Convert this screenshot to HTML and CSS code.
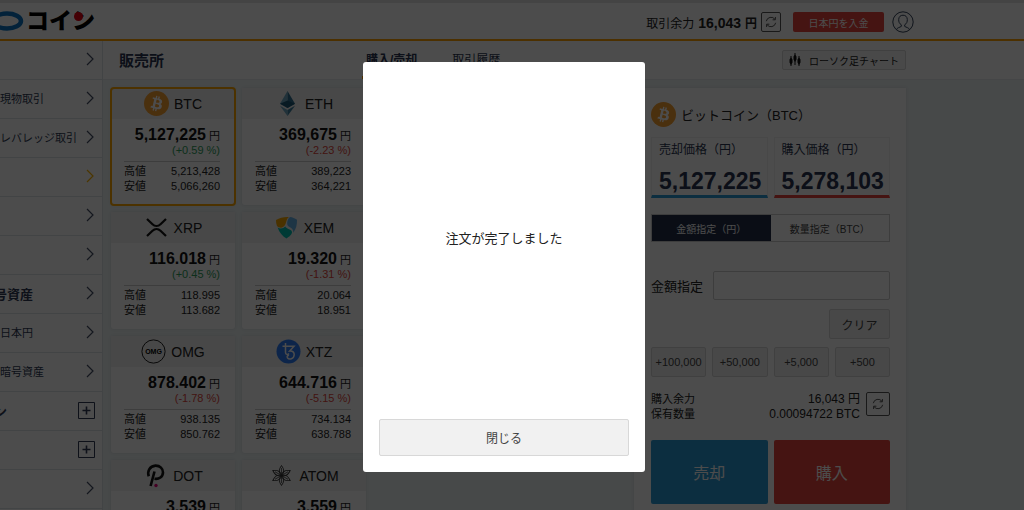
FILE: index.html
```html
<!DOCTYPE html>
<html lang="ja">

<head>
    <meta charset="utf-8">
    <title>販売所</title>
    <link rel="stylesheet" href="styles.css">
</head>

<body>
    <!-- アイコン -->
    <svg class="defs" aria-hidden="true">
        <symbol id="btc" viewBox="0 0 32 32">
            <circle cx="16" cy="16" r="16" fill="#f9a030"/>
            <path fill="#fff" d="M23.189 14.02c.314-2.096-1.283-3.223-3.465-3.975l.708-2.84-1.728-.43-.69 2.765c-.454-.114-.92-.22-1.385-.326l.695-2.783L15.596 6l-.708 2.839c-.376-.086-.746-.17-1.104-.26l.002-.009-2.384-.595-.46 1.846s1.283.294 1.256.312c.7.175.826.638.805 1.006l-.806 3.235c.048.012.11.03.18.057l-.183-.045-1.13 4.532c-.086.212-.303.531-.793.41.018.025-1.256-.313-1.256-.313l-.858 1.978 2.25.561c.418.105.828.215 1.231.318l-.715 2.872 1.727.43.708-2.84c.472.127.93.245 1.378.357l-.706 2.828 1.728.43.715-2.866c2.948.558 5.164.333 6.097-2.333.752-2.146-.037-3.385-1.588-4.192 1.13-.26 1.98-1.003 2.207-2.538zm-3.95 5.538c-.533 2.147-4.148.986-5.32.695l.95-3.805c1.172.293 4.929.872 4.37 3.11zm.535-5.569c-.487 1.953-3.495.96-4.47.717l.86-3.45c.975.243 4.118.696 3.61 2.733z"/>
        </symbol>
        <symbol id="refresh" viewBox="0 0 12 12">
            <path d="M1.3 5.2A4.8 4.8 0 0 1 10 3.4M10.7 6.8A4.8 4.8 0 0 1 2 8.6M10.4 1v2.8H7.6M1.6 11V8.2h2.8" fill="none" stroke="currentColor"/>
        </symbol>
        <symbol id="arrow" viewBox="0 0 8 14">
            <path d="M1 1l6 6-6 6" fill="none" stroke="currentColor" stroke-width="1.2"/>
        </symbol>
        <symbol id="plus" viewBox="0 0 17 17">
            <path d="M.5.5h16v16H.5z" fill="none" stroke="currentColor"/>
            <path d="M8.5 4.5v8M4.5 8.5h8" stroke="currentColor" stroke-width="1.6"/>
        </symbol>
        <symbol id="petal" viewBox="0 0 25 25">
            <path d="M12.500 2.500Q17 8.500 12.500 12.500 8 8.500 12.500 2.500z" fill="none" stroke="#333" stroke-width=".9"/>
            <path d="M12.500 5v7.500" stroke="#333" stroke-width=".7"/>
        </symbol>
    </svg>

    <header>
        <div class="header-inner">
            <a class="logo" href="#">
                <svg width="24" height="20" viewBox="0 0 24 20"><ellipse cx="7" cy="10" rx="14" ry="7.500" fill="none" stroke="#0a73c4" stroke-width="4.500"/></svg>
                <span>コイン<i></i></span>
            </a>
            <div class="account">
                <span>取引余力</span>
                <strong>16,043 <small>円</small></strong>
                <button class="refresh" aria-label="更新"><svg width="12" height="12"><use href="#refresh"/></svg></button>
                <button class="deposit">日本円を入金</button>
                <a class="user" href="#" aria-label="アカウント">
                    <svg width="22" height="22" viewBox="0 0 22 22" fill="none" stroke="#33435a"><circle cx="11" cy="11" r="10.2"/><path d="M4.5 18.6c.5-2 3.400-2.200 4.800-3.200v-1.600C7.300 12.600 6.600 10.800 6.700 8.400 6.800 5.800 8.500 4.200 11 4.200s4.200 1.600 4.300 4.200c.1 2.400-.6 4.200-2.600 5.400v1.600c1.400 1 4.300 1.200 4.800 3.200"/></svg>
                </a>
            </div>
        </div>
    </header>

    <div class="wrap">
        <nav>
            <ul>
                <li><a href="#"><span></span><svg class="arrow"><use href="#arrow"/></svg></a></li>
                <li><a href="#"><span>現物取引</span><svg class="arrow"><use href="#arrow"/></svg></a></li>
                <li><a href="#"><span>レバレッジ取引</span><svg class="arrow"><use href="#arrow"/></svg></a></li>
                <li class="current"><a href="#"><span></span><svg class="arrow"><use href="#arrow"/></svg></a></li>
                <li><a href="#"><span></span><svg class="arrow"><use href="#arrow"/></svg></a></li>
                <li><a href="#"><span></span><svg class="arrow"><use href="#arrow"/></svg></a></li>
                <li class="group"><a href="#"><span>号資産</span><svg class="arrow"><use href="#arrow"/></svg></a></li>
                <li><a href="#"><span>日本円</span><svg class="arrow"><use href="#arrow"/></svg></a></li>
                <li><a href="#"><span>暗号資産</span><svg class="arrow"><use href="#arrow"/></svg></a></li>
                <li class="group"><a href="#"><span>ン</span><svg class="plus"><use href="#plus"/></svg></a></li>
                <li><a href="#"><span></span><svg class="plus"><use href="#plus"/></svg></a></li>
                <li><a href="#"><span></span><svg class="arrow"><use href="#arrow"/></svg></a></li>
                <li><a href="#"><span></span><svg class="arrow"><use href="#arrow"/></svg></a></li>
            </ul>
        </nav>

        <main>
            <div class="titlebar">
                <div class="titlebar-inner">
                    <h1>販売所</h1>
                    <div class="tabs">
                        <a class="active" href="#">購入/売却</a>
                        <a href="#">取引履歴</a>
                    </div>
                    <button class="chart">
                        <svg width="12" height="14" viewBox="0 0 12 14"><path d="M2 3v10M6 0v12M10 3v10" stroke="#111"/><path d="M2 4.500l1.500 2v3L2 12 .5 9.500v-3zM6 1.500l1.500 2v3L6 9 4.500 6.500v-3zM10 4.500l1.500 2v3L10 12 8.500 9.500v-3z" fill="#111"/></svg>
                        ローソク足チャート
                    </button>
                </div>
            </div>

            <div class="content">
                <ul class="coins">
                    <li class="coin selected">
                        <h2><svg width="25" height="25"><use href="#btc"/></svg>BTC</h2>
                        <div class="rate">
                            <p class="price"><b>5,127,225</b> 円</p>
                            <p class="up">(+0.59 %)</p>
                            <dl><dt>高値</dt><dd>5,213,428</dd><dt>安値</dt><dd>5,066,260</dd></dl>
                        </div>
                    </li>
                    <li class="coin">
                        <h2>
                            <svg width="25" height="25" viewBox="0 0 25 25"><path fill="#6fa8c4" d="M12.500 0L5 12.800l7.500 4.200z"/><path fill="#2f6f8f" d="M12.500 0L20 12.800l-7.500 4.200z"/><path fill="#1d5877" d="M12.500 9.500L5 12.800l7.500 4.200 7.500-4.200z"/><path fill="#6fa8c4" d="M5 14.800l7.500 4.300V25z"/><path fill="#3c7e9d" d="M20 14.800l-7.500 4.300V25z"/></svg>ETH
                        </h2>
                        <div class="rate">
                            <p class="price"><b>369,675</b> 円</p>
                            <p class="down">(-2.23 %)</p>
                            <dl><dt>高値</dt><dd>389,223</dd><dt>安値</dt><dd>364,221</dd></dl>
                        </div>
                    </li>
                    <li class="coin">
                        <h2>
                            <svg width="25" height="25" viewBox="0 0 25 25" fill="none" stroke="#111" stroke-width="2.200"><path d="M3 4l5.500 5.300a5.800 5.800 0 0 0 8 0L22 4M3 21l5.500-5.300a5.800 5.800 0 0 1 8 0L22 21"/></svg>XRP
                        </h2>
                        <div class="rate">
                            <p class="price"><b>116.018</b> 円</p>
                            <p class="up">(+0.45 %)</p>
                            <dl><dt>高値</dt><dd>118.995</dd><dt>安値</dt><dd>113.682</dd></dl>
                        </div>
                    </li>
                    <li class="coin">
                        <h2>
                            <svg width="25" height="25" viewBox="0 0 25 25"><path fill="#f7a800" d="M2 5C6 2.600 10.500 1.600 15 2c-2.500 1.600-2.300 4-3.500 7C9.500 13.500 5.500 13.500 3 11 2.200 9 2 7 2 5z"/><path fill="#67b2e8" d="M16 2.100c2.500.3 4.800 1.200 7 2.600.2 5-.9 9.300-3.700 13 .3-3-1.500-4.700-4.300-5.900-3.400-1.600-1.400-8.500 1-9.700z"/><path fill="#00c4b3" d="M3.700 12.500c2.600 1.600 5.600 1 7.600-1.100 1.200 2.800 6.500 2.300 6.700 5.700.1 2.500-3 4.900-5.500 6.400-4.300-2.500-7.300-6.200-8.800-11z"/></svg>XEM
                        </h2>
                        <div class="rate">
                            <p class="price"><b>19.320</b> 円</p>
                            <p class="down">(-1.31 %)</p>
                            <dl><dt>高値</dt><dd>20.064</dd><dt>安値</dt><dd>18.951</dd></dl>
                        </div>
                    </li>
                    <li class="coin">
                        <h2>
                            <svg width="25" height="25" viewBox="0 0 25 25"><circle cx="12.500" cy="12.500" r="11.600" fill="none" stroke="#222"/><text class="omg" x="12.500" y="15" text-anchor="middle">OMG</text></svg>OMG
                        </h2>
                        <div class="rate">
                            <p class="price"><b>878.402</b> 円</p>
                            <p class="down">(-1.78 %)</p>
                            <dl><dt>高値</dt><dd>938.135</dd><dt>安値</dt><dd>850.762</dd></dl>
                        </div>
                    </li>
                    <li class="coin">
                        <h2>
                            <svg width="25" height="25" viewBox="0 0 25 25"><circle cx="12.500" cy="12.500" r="12" fill="#2c7df7"/><path d="M9.500 4v9.500c0 2.300 2.500 2.400 3.400 1M6.500 7.300h11.500l-4.300 4.700c3-.3 4.600 1.300 4.500 3.700-.2 4.200-5 5.400-6.800 3-.8-1.300.3-2.600 1.500-1.900" fill="none" stroke="#fff" stroke-width="1.500"/></svg>XTZ
                        </h2>
                        <div class="rate">
                            <p class="price"><b>644.716</b> 円</p>
                            <p class="down">(-5.15 %)</p>
                            <dl><dt>高値</dt><dd>734.134</dd><dt>安値</dt><dd>638.788</dd></dl>
                        </div>
                    </li>
                    <li class="coin">
                        <h2>
                            <svg width="25" height="25" viewBox="0 0 25 25"><path d="M5.800 13.300C4 8.500 6.500 3 12.500 2.600c4.500-.1 7.600 3.100 7.500 6.800-.1 4.500-4 7-8.500 6.300M11.500 8.500L7.600 23" fill="none" stroke="#111" stroke-width="2.600"/><circle cx="13" cy="22.500" r="1.700" fill="#e6007a"/></svg>DOT
                        </h2>
                        <div class="rate">
                            <p class="price"><b>3,539</b> 円</p>
                        </div>
                    </li>
                    <li class="coin">
                        <h2>
                            <svg width="25" height="25" viewBox="0 0 25 25"><use href="#petal"/><use href="#petal" transform="rotate(60 12.500 12.500)"/><use href="#petal" transform="rotate(120 12.500 12.500)"/><use href="#petal" transform="rotate(180 12.500 12.500)"/><use href="#petal" transform="rotate(240 12.500 12.500)"/><use href="#petal" transform="rotate(300 12.500 12.500)"/></svg>ATOM
                        </h2>
                        <div class="rate">
                            <p class="price"><b>3,559</b> 円</p>
                        </div>
                    </li>
                </ul>

                <section class="order">
                    <h2><svg width="25" height="25"><use href="#btc"/></svg>ビットコイン（BTC）</h2>
                    <div class="pair quotes">
                        <div class="quote sell"><span>売却価格（円）</span><b>5,127,225</b></div>
                        <div class="quote buy"><span>購入価格（円）</span><b>5,278,103</b></div>
                    </div>
                    <div class="toggle">
                        <button class="on">金額指定（円）</button>
                        <button>数量指定（BTC）</button>
                    </div>
                    <div class="amount">
                        <label for="amount">金額指定</label>
                        <input id="amount" type="text">
                    </div>
                    <button class="gray clear">クリア</button>
                    <div class="add">
                        <button class="gray">+100,000</button>
                        <button class="gray">+50,000</button>
                        <button class="gray">+5,000</button>
                        <button class="gray">+500</button>
                    </div>
                    <div class="balance">
                        <dl><dt>購入余力</dt><dd>16,043 円</dd><dt>保有数量</dt><dd>0.00094722 BTC</dd></dl>
                        <button class="refresh" aria-label="更新"><svg width="12" height="12"><use href="#refresh"/></svg></button>
                    </div>
                    <div class="pair">
                        <button class="trade sell">売却</button>
                        <button class="trade buy">購入</button>
                    </div>
                </section>
            </div>
        </main>
    </div>

    <!-- 注文完了ダイアログ -->
    <div class="overlay">
        <div class="modal" role="dialog" aria-modal="true">
            <p>注文が完了しました</p>
            <button class="gray">閉じる</button>
        </div>
    </div>
</body>

</html>
```

FILE: styles.css
```css
* {
    box-sizing: border-box;
}

body {
    margin: 0;
    height: 100vh;
    overflow: hidden;
    background: #edf3f3;
    color: #222;
    font-family: "Liberation Sans", "Noto Sans CJK JP", sans-serif;
    font-size: 11px;
}

h1, h2, p, ul, dl, dd {
    margin: 0;
    padding: 0;
    list-style: none;
}

a {
    color: inherit;
    text-decoration: none;
}

button, input {
    margin: 0;
    padding: 0;
    font-family: inherit;
    border-radius: 2px;
}

svg {
    flex: none;
}

.defs {
    position: absolute;
    width: 0;
    height: 0;
}

/* header */
header {
    height: 41px;
    border-top: 3px solid #e4e4e4;
    border-bottom: 2px solid #ffa000;
    background: #fff;
}

.header-inner {
    display: flex;
    justify-content: space-between;
    align-items: center;
    max-width: 914px;
    height: 36px;
}

.logo {
    display: flex;
    align-items: center;
    gap: 2px;
    color: #000;
    font-size: 23px;
    line-height: 24px;
    font-weight: 900;
}

.logo span {
    position: relative;
}

/* red dot on the ン */
.logo i {
    position: absolute;
    top: 3px;
    right: 12px;
    width: 9px;
    height: 9px;
    border-radius: 50%;
    background: #e60012;
}

.account {
    display: flex;
    align-items: center;
    padding-top: 2px;
    font-size: 12px;
}

.account strong {
    margin: 0 4px;
    font-size: 14px;
}

.account small {
    font-size: 12px;
}

.refresh {
    display: flex;
    align-items: center;
    justify-content: center;
    width: 20px;
    height: 20px;
    border: 1px solid #555;
    background: #fff;
    color: #555;
}

.deposit {
    width: 91px;
    height: 20px;
    margin: 0 8px 0 12px;
    border: 0;
    background: #e8453c;
    color: #fff;
    font-size: 10px;
}

.user {
    display: flex;
}

/* side menu */
.wrap {
    display: flex;
}

nav {
    flex: 0 0 103px;
    overflow: hidden;
    border-right: 1px solid #dde3e6;
    background: #fff;
    color: #2f3b55;
}

nav li a {
    display: flex;
    align-items: center;
    justify-content: space-between;
    height: 39px;
    padding: 0 7px 2px 0;
    border-bottom: 1px solid #dde3e6;
    white-space: nowrap;
}

nav .group {
    font-size: 13px;
    font-weight: bold;
}

/* group names run past the left edge */
nav .group span {
    margin-left: -6px;
}

.arrow {
    width: 8px;
    height: 14px;
    margin-right: 1px;
    color: #444f66;
}

.current .arrow {
    color: #ffb400;
}

.plus {
    width: 17px;
    height: 17px;
}

/* title */
main {
    flex: 1;
    min-width: 0;
}

.titlebar {
    border-bottom: 1px solid #e6ecee;
    background: #fff;
}

.titlebar-inner {
    display: flex;
    align-items: center;
    max-width: 803px;
    height: 38px;
    padding-left: 16px;
}

h1 {
    width: 243px;
    padding-bottom: 2px;
    color: #2a3550;
    font-size: 15px;
}

.tabs {
    display: flex;
    flex: 1;
    gap: 27px;
    color: #2a3550;
    font-size: 12px;
}

.tabs a {
    padding: 3px 4px 0;
    line-height: 32px;
    border-bottom: 3px solid transparent;
}

.tabs .active {
    border-color: #ffa000;
    font-weight: bold;
}

.chart {
    display: flex;
    align-items: center;
    justify-content: center;
    gap: 8px;
    width: 124px;
    height: 20px;
    border: 1px solid #d5d5d5;
    background: #f4f4f4;
    color: #222;
    font-size: 10px;
}

.content {
    display: flex;
    justify-content: space-between;
    align-items: flex-start;
    max-width: 803px;
    padding: 8px 0 0 8px;
}

/* coins */
.coins {
    display: grid;
    grid-template-columns: 124px 124px;
    gap: 7px;
}

.coin {
    height: 117px;
    border-radius: 3px;
    background: #fff;
    box-shadow: 0 0 3px #d3dde0;
}

.selected {
    outline: 2px solid #ffa800;
    outline-offset: -1px;
}

.coin h2 {
    display: flex;
    align-items: center;
    justify-content: center;
    gap: 5px;
    height: 31px;
    background: #f0f0f0;
    font-size: 14px;
    font-weight: normal;
}

.omg {
    font-size: 7px;
    font-weight: bold;
}

.rate {
    padding: 8px 15px 0 13px;
    text-align: right;
}

.price {
    line-height: 16px;
}

.price b {
    color: #111;
    font-size: 16px;
}

.up, .down {
    padding-bottom: 4px;
    line-height: 13px;
    border-bottom: 1px solid #ccc;
    color: #2e9e5b;
}

.down {
    color: #e0463c;
}

dl {
    display: grid;
    grid-template-columns: auto 1fr;
    line-height: 15px;
    text-align: right;
}

dt {
    text-align: left;
}

.rate dl {
    padding-top: 2px;
}

/* order form */
.order {
    width: 272px;
    padding: 14px 16px 24px 17px;
    background: #fff;
    box-shadow: 0 0 3px #d3dde0;
}

.order h2 {
    display: flex;
    align-items: center;
    gap: 5px;
    height: 26px;
    padding-bottom: 2px;
    font-size: 13px;
    font-weight: normal;
}

.pair {
    display: grid;
    grid-template-columns: repeat(2, minmax(0, 1fr));
    gap: 6px;
}

.quotes {
    margin: 9px 0 16px;
}

.quote {
    display: flex;
    flex-direction: column;
    height: 61px;
    padding: 2px 0 0 7px;
    border: 1px solid #f0f0f0;
    border-bottom: 3px solid #2a9bd6;
    color: #2a3550;
    font-size: 12px;
    line-height: 20px;
    white-space: nowrap;
}

.quote b {
    font-size: 23px;
    line-height: 42px;
}

.quote.buy {
    border-bottom-color: #e8453c;
}

.toggle {
    display: grid;
    grid-template-columns: 1fr 1fr;
    height: 28px;
    border: 1px solid #ccc;
}

.toggle button {
    border: 0;
    border-radius: 0;
    background: #fff;
    color: #444;
    font-size: 10px;
}

.toggle .on {
    background: #222e48;
    color: #fff;
}

.amount {
    display: flex;
    align-items: center;
    gap: 10px;
    margin: 29px 0 9px;
    font-size: 13px;
}

.amount input {
    flex: 1;
    min-width: 0;
    height: 29px;
    border: 1px solid #ccc;
    background: #fff;
}

.gray {
    height: 30px;
    border: 1px solid #d8d8d8;
    background: #f1f1f1;
    color: #444;
    font-size: 11px;
}

.clear {
    display: block;
    width: 61px;
    margin: 0 0 8px auto;
    font-size: 12px;
}

.add {
    display: grid;
    grid-template-columns: repeat(4, 1fr);
    gap: 6px;
}

.balance {
    display: flex;
    align-items: flex-start;
    gap: 6px;
    margin: 15px 0 18px;
}

.balance dl {
    flex: 1;
}

.balance dd {
    font-size: 12px;
}

.balance .refresh {
    width: 24px;
    height: 24px;
}

.trade {
    height: 64px;
    border: 0;
    color: #fff;
    font-size: 16px;
}

.trade.sell {
    background: #2a9bd6;
}

.trade.buy {
    background: #e8453c;
}

/* dialog */
.overlay {
    position: fixed;
    top: 0;
    right: 0;
    bottom: 0;
    left: 0;
    display: flex;
    align-items: center;
    justify-content: center;
    padding: 24px 16px 0 0;
    background: rgba(0, 0, 0, 0.7);
}

.modal {
    display: flex;
    flex-direction: column;
    width: 282px;
    height: 410px;
    padding: 16px;
    border-radius: 3px;
    background: #fff;
    font-size: 13px;
}

.modal p {
    margin: auto;
    padding-bottom: 22px;
}

.modal .gray {
    height: 37px;
    font-size: 12px;
}
```
